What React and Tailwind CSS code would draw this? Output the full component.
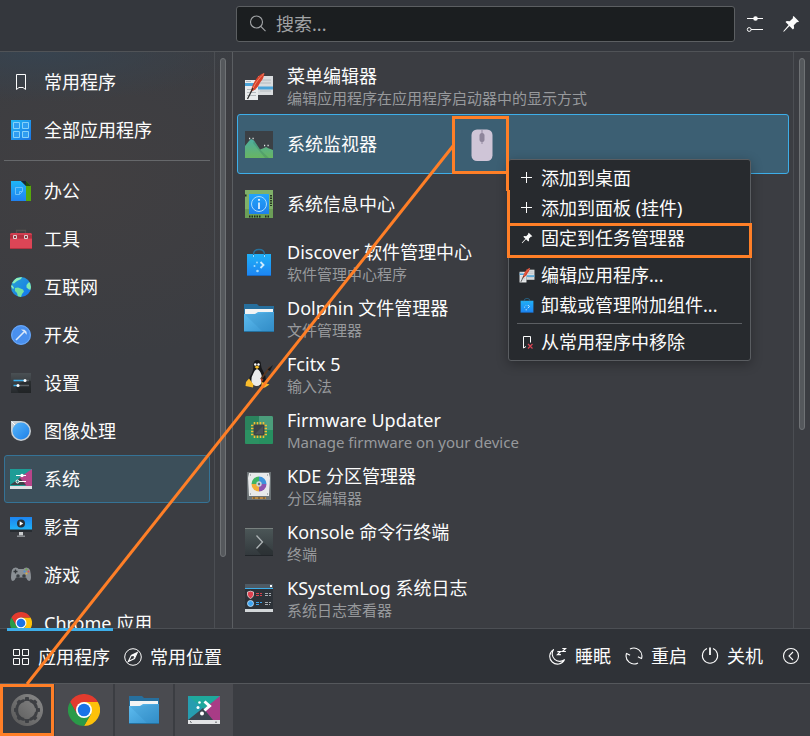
import React from "react";

/* ---------- symbolic icons ---------- */

function BookmarkIcon({ className = "size-[22px]" }) {
  return (
    <svg viewBox="0 0 22 22" className={className} fill="none" stroke="#fcfcfc" strokeWidth="1">
      <path d="M6.5 3.5h9v15l-2.5-2h-4l-2.5 2z" />
    </svg>
  );
}

function SearchIcon() {
  return (
    <svg viewBox="0 0 20 20" className="size-5 shrink-0" fill="none" stroke="#a3a6a8" strokeWidth="1.1">
      <circle cx="8.5" cy="8" r="6" />
      <path d="M12.8 12.3l4.7 4.9" />
    </svg>
  );
}

function ConfigureIcon() {
  return (
    <svg viewBox="0 0 18 18" className="size-[18px]" fill="none" stroke="#fcfcfc">
      <path d="M1 3.5h16M5 14.5h12" />
      <circle cx="9.5" cy="3.5" r="2.3" fill="#fcfcfc" stroke="none" />
      <circle cx="3.2" cy="14.5" r="1.9" />
    </svg>
  );
}

function PinIcon({ className }) {
  return (
    <svg viewBox="0 0 18 18" className={className} fill="#fcfcfc">
      <path d="M11.6 1l5.4 5.4-1 .9-.9-.4-3.3 3.3.3 3-1.2 1.2-3.4-3.4L1.9 16.7 1.2 16.2 6.6 10.1 3.5 7l1.2-1 3 .3L11.1 2.9l-.4-.9z" />
    </svg>
  );
}

function GridIcon() {
  return (
    <svg viewBox="0 0 18 18" className="size-[18px]" fill="none" stroke="#fcfcfc">
      <path d="M1.5 1.5h6v6h-6zM10.5 1.5h6v6h-6zM1.5 10.5h6v6h-6zM10.5 10.5h6v6h-6z" />
    </svg>
  );
}

function CompassIcon() {
  return (
    <svg viewBox="0 0 18 18" className="size-[18px]" fill="none" stroke="#fcfcfc">
      <circle cx="9" cy="9" r="8.3" />
      <path d="M13.3 4.5L7.3 7.5l-3 6 6.2-3z" strokeWidth="1.1" />
      <path d="M13.3 4.5L7.3 7.5l2.8 3z" fill="#fcfcfc" stroke="none" />
      <circle cx="9" cy="9" r="1" fill="#2f3237" stroke="none" />
    </svg>
  );
}

function SleepIcon() {
  return (
    <svg viewBox="0 0 18 18" className="size-[18px]" fill="none" stroke="#fcfcfc" strokeWidth="1.1">
      <path d="M4.5 2.6A7.8 7.8 0 1 0 15.5 12.8 A7.6 7.6 0 0 1 4.5 2.6z" strokeLinejoin="round" />
      <path d="M8.3 4.6h3.2L8.5 7.6h3.4M13.3 1.5h3.2L13.5 4.5h3.4" strokeWidth="1.2" />
    </svg>
  );
}

function RestartIcon() {
  return (
    <svg viewBox="0 0 18 18" className="size-[18px]" fill="none" stroke="#fcfcfc" strokeWidth="1.1">
      <path d="M5 2.1A8 8 0 0 1 16.5 11.500M1.5 6.500A8 8 0 0 0 13 15.900" />
      <path d="M16.900 11.800L12.900 9.800M1.100 6.200L5.100 8.200" />
    </svg>
  );
}

function PowerIcon() {
  return (
    <svg viewBox="0 0 18 18" className="size-[18px]" fill="none" stroke="#fcfcfc" strokeWidth="1.1">
      <path d="M6 1.6a7.6 7.6 0 1 0 6 0" />
      <path d="M9 .5v7.5" strokeWidth="1.8" />
    </svg>
  );
}

function BackIcon() {
  return (
    <svg viewBox="0 0 18 18" className="size-[18px]" fill="none" stroke="#fcfcfc" strokeWidth="1.1">
      <circle cx="9" cy="9" r="7.5" />
      <path d="M11 5L7 9l4 4" />
    </svg>
  );
}

function PlusIcon() {
  return (
    <svg viewBox="0 0 16 16" className="size-4" stroke="#fcfcfc">
      <path d="M7.5 2v11M2 7.5h11" />
    </svg>
  );
}

function BookmarkRemoveIcon() {
  return (
    <svg viewBox="0 0 16 16" className="size-4" fill="none">
      <path d="M7 12.5l-2.5 1.5V2.5h7v6" stroke="#fcfcfc" />
      <path d="M9 10l4.5 4.5M13.500 10L9 14.500" stroke="#da4453" strokeWidth="1.2" />
    </svg>
  );
}

/* ---------- category icons ---------- */

function AllAppsIcon() {
  return (
    <svg viewBox="0 0 22 22" className="size-[22px]">
      <defs>
        <linearGradient id="allApps" x1="0" y1="0" x2="1" y2="1">
          <stop offset="0" stopColor="#22b8f4" />
          <stop offset="1" stopColor="#1c74e4" />
        </linearGradient>
      </defs>
      <path d="M1 1h20v20H1z" fill="url(#allApps)" />
      <path d="M3.5 3.5h6v6h-6zM12.5 3.5h6v6h-6zM3.5 12.5h6v6h-6zM12.5 12.5h6v6h-6z" fill="#2f9df0" stroke="#86d2fa" />
    </svg>
  );
}

function OfficeIcon() {
  return (
    <svg viewBox="0 0 22 22" className="size-[22px]">
      <defs>
        <linearGradient id="office" x1="0" y1="0" x2="0" y2="1">
          <stop offset="0" stopColor="#1fb6f8" />
          <stop offset="1" stopColor="#2081f0" />
        </linearGradient>
      </defs>
      <path d="M12 1h4l5 5v15h-9z" fill="#56a80c" />
      <path d="M16 1v5h5z" fill="#234a10" />
      <path d="M1 1h10l5 5v15H1z" fill="url(#office)" />
      <path d="M11 1h5v5z" fill="#17263a" />
      <path d="M5.5 7.5h7v4l-3 3h-4zM12.5 11.5h-3v3" fill="none" stroke="#6cbff9" />
    </svg>
  );
}

function ToolboxIcon() {
  return (
    <svg viewBox="0 0 22 22" className="size-[22px]">
      <path d="M6.5 6V2.5h9V6" fill="none" stroke="#54534f" strokeWidth="1.3" />
      <path d="M0 21V6.5Q0 5 1.5 5h19Q22 5 22 6.5V21z" fill="#d23f50" />
      <path d="M0 7h22v3.5H0z" fill="#b0303f" />
      <path d="M0 11h22v9H0z" fill="#dc4556" />
      <path d="M0 20.300h22v.7H0z" fill="#a52f3c" />
      <path d="M3.5 7.5h3v3h-3zM14.5 7.5h3v3h-3z" fill="#8e3640" stroke="#dcd3d3" />
    </svg>
  );
}

function GlobeIcon() {
  return (
    <svg viewBox="0 0 22 22" className="size-[22px]">
      <defs>
        <linearGradient id="globe" x1="0" y1="0" x2="1" y2="1">
          <stop offset="0" stopColor="#2aa4cf" />
          <stop offset="1" stopColor="#1274f2" />
        </linearGradient>
        <clipPath id="globeClip">
          <circle cx="11" cy="11" r="10" />
        </clipPath>
      </defs>
      <circle cx="11" cy="11" r="10" fill="url(#globe)" />
      <g clipPath="url(#globeClip)">
        <path d="M2 7L6 2l6-1-1 2-4 2-3 2.500zM0 9l2.500.5L4 12l-1 1z" fill="#8ff0b8" />
        <path d="M5 12l3-.5 5 2 1 2-2 2.500-1 3H8l-1-4-2-2z" fill="#74e3a0" />
        <path d="M16.500 9l2-2.500L22 6v8l-3-.500-2.500-2z" fill="#82eaae" />
      </g>
    </svg>
  );
}

function HammerIcon() {
  return (
    <svg viewBox="0 0 22 22" className="size-[22px]">
      <circle cx="11" cy="11" r="10" fill="#4a90ee" />
      <circle cx="11" cy="11" r="9.300" fill="none" stroke="#6fabf7" />
      <path d="M6 16l8-8" stroke="#dce9fa" strokeWidth="1.600" />
      <path d="M11 5.500l3.500.2 2 2 .3 3-1.600-1.500-2-2z" fill="#dce9fa" />
    </svg>
  );
}

function SettingsIcon() {
  return (
    <svg viewBox="0 0 22 22" className="size-[22px]">
      <defs>
        <linearGradient id="settings" x1="0" y1="0" x2="0" y2="1">
          <stop offset="0" stopColor="#4a5054" />
          <stop offset="1" stopColor="#25292c" />
        </linearGradient>
      </defs>
      <path d="M1 1h20v20H1z" fill="url(#settings)" />
      <path d="M5 14l4 7h12V9l-5-1z" fill="#1b1e20" opacity=".5" />
      <path d="M3.5 8.500H15M3.500 13.500h5" stroke="#3daee9" strokeWidth="1.300" />
      <path d="M15 8.500h4M9 13.500h10" stroke="#5b6165" strokeWidth="1.300" />
      <circle cx="15" cy="8.500" r="1.500" fill="#fff" />
      <circle cx="8" cy="13.500" r="1.500" fill="#fff" />
    </svg>
  );
}

function GraphicsIcon() {
  return (
    <svg viewBox="0 0 22 22" className="size-[22px]">
      <defs>
        <linearGradient id="graphics" x1="0" y1="0" x2="1" y2="1">
          <stop offset="0" stopColor="#57b6fa" />
          <stop offset="1" stopColor="#1d7fe8" />
        </linearGradient>
      </defs>
      <path d="M1 1h10a10 10 0 1 1-10 10z" fill="#c9d0d5" />
      <circle cx="11" cy="11" r="8.500" fill="url(#graphics)" />
      <path d="M1.500 1.500L5 5" stroke="#fff" />
    </svg>
  );
}

function SystemIcon() {
  return (
    <svg viewBox="0 0 22 22" className="size-[22px]">
      <path d="M0 1h22v19H0z" fill="#1e9c96" />
      <path d="M22 1v16H10z" fill="#b03f83" />
      <path d="M22 1L9 10l7 8h6z" fill="#b7458a" />
      <path d="M0 17L10 10l6 7z" fill="#3d4248" />
      <path d="M0 18h22v3H0z" fill="#dfe1e3" />
      <path d="M6 7.500h10M7 13.500h9" stroke="#fff" />
      <circle cx="12" cy="7.500" r="1.700" fill="#fff" />
      <circle cx="7.500" cy="13.500" r="1.500" fill="#1e8582" stroke="#fff" />
    </svg>
  );
}

function MultimediaIcon() {
  return (
    <svg viewBox="0 0 22 22" className="size-[22px]">
      <defs>
        <linearGradient id="multimedia" x1="0" y1="0" x2="0" y2="1">
          <stop offset="0" stopColor="#1d84f0" />
          <stop offset="1" stopColor="#1fb4f8" />
        </linearGradient>
      </defs>
      <path d="M0 1h22v13H0z" fill="url(#multimedia)" />
      <path d="M0 13.500h22v2.500H0z" fill="#272c31" />
      <circle cx="11" cy="7.500" r="4" fill="#2a3138" />
      <path d="M9.700 5.300v4.400l3.500-2.200z" fill="#fff" />
      <path d="M9 16h4v3.500H9z" fill="#c8cbcd" />
      <path d="M7 19.500h8V21H7z" fill="#888c90" />
    </svg>
  );
}

function GamesIcon() {
  return (
    <svg viewBox="0 0 22 22" className="size-[22px]">
      <path d="M2 6q1-2.500 3.500-2.500Q8 3.500 8.500 5h5q.5-1.500 3-1.500T20 6q1 4 1 7.500-.2 3.500-2 3.500-1.500 0-3-3.500H6Q4.500 17 3 17q-1.800 0-2-3.500Q1 10 2 6z" fill="#8b9095" />
      <path d="M5.500 5.500v4M3.500 7.500h4" stroke="#33373b" strokeWidth="1.300" />
      <circle cx="8" cy="12" r="1.800" fill="#3a3f44" />
      <circle cx="14" cy="12" r="1.800" fill="#3a3f44" />
      <circle cx="16.500" cy="5.500" r="1" fill="#6fae46" />
      <circle cx="18.500" cy="7.500" r="1" fill="#d9534f" />
      <circle cx="14.500" cy="7.500" r="1" fill="#4b91d8" />
      <circle cx="16.500" cy="9.500" r="1" fill="#e3b23c" />
    </svg>
  );
}

function ChromeIcon({ className = "size-[22px]" }) {
  return (
    <svg viewBox="0 0 48 48" className={className}>
      <path d="M24 12h20.800A24 24 0 0 1 24 48l10.400-18z" fill="#fdc10a" />
      <path d="M3.200 12A24 24 0 0 1 44.800 12H24L13.600 30z" fill="#e33b2e" />
      <path d="M3.200 12A24 24 0 0 0 24 48l10.400-18H13.600z" fill="#2a9a48" />
      <circle cx="24" cy="24" r="12" fill="#fff" />
      <circle cx="24" cy="24" r="9.400" fill="#1a73e8" />
    </svg>
  );
}

/* ---------- application icons ---------- */

function MenuEditorIcon({ className = "size-[30px]" }) {
  return (
    <svg viewBox="0 0 30 30" className={className}>
      <path d="M14 5h15v19H14z" fill="#d9dcde" />
      <path d="M16 9h11M16 12h11M16 20h11" stroke="#b4babe" />
      <path d="M14 15.500h15v3H14z" fill="#4aa3d8" />
      <path d="M1 9h13v20H1z" fill="#e9ebec" />
      <path d="M1 12h13v3H1z" fill="#4aa3d8" />
      <path d="M3 18.500h9M3 21.500h9M3 24.500h9M2 10.500h5" stroke="#b4babe" />
      <path d="M20.500 2c-6 1-11 8-14 19 6-2 8-6 10-10 2-2 3.500-5 4-9z" fill="#d6402b" />
      <path d="M20 2.500C14 8 10 14 8 20" stroke="#f08a6a" fill="none" />
      <path d="M9 17L3.500 28" stroke="#2b2b2b" strokeWidth="1.300" />
    </svg>
  );
}

function MonitorIcon() {
  return (
    <svg viewBox="0 0 30 30" className="size-[30px]">
      <defs>
        <linearGradient id="monitor" x1="0" y1="0" x2="0" y2="1">
          <stop offset="0" stopColor="#4dada0" />
          <stop offset="1" stopColor="#68b562" />
        </linearGradient>
      </defs>
      <path d="M1 2h28v27H1z" fill="#3b4045" />
      <path d="M1 17l4-5 2-2 3 1.500 6 9 4-1.500 2-1 3 1.500 4 1.500v8H1z" fill="url(#monitor)" />
      <path d="M10 12l6 8.500 9 8.500H21L9 14z" fill="#2d6c5a" opacity=".25" />
      <path d="M5 9.500h1.200M8.500 9.500h1.200M20 16.500h1.200M23.500 16.500h1.200" stroke="#e6ebe9" strokeWidth="1.500" />
    </svg>
  );
}

function InfoCenterIcon() {
  return (
    <svg viewBox="0 0 30 30" className="size-[30px]">
      <defs>
        <linearGradient id="infoCenter" x1="0" y1="0" x2="0" y2="1">
          <stop offset="0" stopColor="#22a4fb" />
          <stop offset="1" stopColor="#1d80ec" />
        </linearGradient>
      </defs>
      <path d="M1 1h28v28H1z" fill="#7fb069" />
      <path d="M1 20h28v9H1z" fill="#6c9e57" />
      <path d="M1 6.500h2M27 6v11M5 27.500h12M21 27.500h4" stroke="#1f2b1b" strokeWidth="1.800" strokeDasharray="1.500 1" />
      <path d="M5 5h20v20H5z" fill="url(#infoCenter)" />
      <circle cx="15" cy="15" r="7.500" fill="none" stroke="#a9dbfd" />
      <path d="M15 13.500V20" stroke="#fff" strokeWidth="1.500" />
      <path d="M15 10v1.800" stroke="#fff" strokeWidth="1.700" />
    </svg>
  );
}

function DiscoverIcon({ className = "size-[30px]" }) {
  return (
    <svg viewBox="0 0 30 30" className={className}>
      <defs>
        <linearGradient id="discover" x1="0" y1="0" x2="0" y2="1">
          <stop offset="0" stopColor="#1fb0f7" />
          <stop offset="1" stopColor="#1d84f2" />
        </linearGradient>
      </defs>
      <path d="M3 7h24v22H3z" fill="url(#discover)" />
      <path d="M3 28h24v1H3z" fill="#1669c4" />
      <path d="M9.500 10V7.500q0-5 5.500-5t5.500 5V10" fill="none" stroke="#27719b" strokeWidth="1.300" />
      <path d="M9.500 8v2M20.500 8v2" stroke="#9fdcfb" />
      <path d="M16.500 15l3 3-3 3" fill="none" stroke="#cfecfe" strokeWidth="1.800" />
      <circle cx="13" cy="15.500" r=".9" fill="#a5dafb" />
      <circle cx="10.500" cy="19" r="1" fill="#a5dafb" />
      <circle cx="13.500" cy="24" r="1.300" fill="#a5dafb" />
    </svg>
  );
}

function FolderIcon() {
  return (
    <svg viewBox="0 0 30 30" className="size-[30px]">
      <defs>
        <linearGradient id="folder" x1="0" y1="0" x2="1" y2="1">
          <stop offset="0" stopColor="#5fbdf0" />
          <stop offset="1" stopColor="#3390cc" />
        </linearGradient>
      </defs>
      <path d="M0 1h13l2 2h15v8H0z" fill="#276f9d" />
      <path d="M1 6h28v6H1z" fill="#f3f4f4" />
      <path d="M0 29V11h11l3-2h16v20z" fill="url(#folder)" />
      <path d="M1 11.500l18 17.500h11V9.500z" fill="#2a7db5" opacity=".2" />
      <path d="M0 28h30v1H0z" fill="#25719f" />
    </svg>
  );
}

function TuxIcon() {
  return (
    <svg viewBox="0 0 30 30" className="size-[30px]">
      <path d="M13 1q4 0 4 5 0 3 2.500 7 3 5 2 9l-3 5H8l-3-5q0-4 3-8 1.500-3 1.300-7Q9.300 1 13 1z" fill="#16171a" />
      <path d="M13 10q3 1 4.500 6 1.500 7-1 9.500-2 2-4.500 1.500-4-.5-4.500-4Q7 18 9.500 14q1.500-3.500 3.500-4z" fill="#e9eaeb" />
      <circle cx="11.300" cy="5.500" r="1.200" fill="#fff" />
      <circle cx="14.500" cy="5.500" r="1.200" fill="#fff" />
      <path d="M10.500 8l2.500-1.500L15.500 8l-2.500 2z" fill="#f6bd27" />
      <path d="M5 19.500l4.500 6-.5 3L1.500 27l.5-4zM17.500 23l3.500 1 4.500 1.500L21 28.500l-3.500.5z" fill="#f9bc2c" />
      <path d="M17 20l9-12" stroke="#5b371f" strokeWidth="1.800" />
      <path d="M23.500 10.500l5.500-4.500-3 6z" fill="#17181b" />
      <path d="M16.500 19l3 1.500-2 3z" fill="#a23c22" />
    </svg>
  );
}

function FirmwareIcon() {
  return (
    <svg viewBox="0 0 30 30" className="size-[30px]">
      <rect x="1" y="1" width="28" height="28" rx="1.500" fill="#2b835d" />
      <path d="M15 1h12.500Q29 1 29 2.500V15H15z" fill="#4b9d7b" />
      <path d="M1 15h14v14H2.500Q1 29 1 27.500z" fill="#2c9162" />
      <path d="M15 15h14v12.500q0 1.500-1.500 1.500H15z" fill="#279060" />
      <path d="M10.500 7v3M13.500 7v3M16.500 7v3M19.500 7v3M10.500 20v3M13.500 20v3M16.500 20v3M19.500 20v3M7 10.500h3M7 13.500h3M7 16.500h3M7 19.500h3M20 10.500h3M20 13.500h3M20 16.500h3M20 19.500h3" stroke="#f0bd35" strokeWidth="1.600" />
      <path d="M9.500 9.500h11v11h-11z" fill="#3c4347" />
      <path d="M11 19l8-8v8z" fill="#4c5357" />
    </svg>
  );
}

function PartitionIcon() {
  return (
    <svg viewBox="0 0 30 30" className="size-[30px]">
      <path d="M3 1h24v28H3z" fill="#6b7275" />
      <path d="M5 2h20l1 5-1 18H5L4 7z" fill="#e8eaeb" />
      <path d="M8 26h14v2H8z" fill="#ba8a45" />
      <path d="M10 26v2M15 26v2M20 26v2" stroke="#54432b" />
      <path d="M15 13V5.500A7.500 7.500 0 0 1 22.500 13z" fill="#3e93dc" />
      <path d="M15 13h7.500a7.500 7.500 0 0 1-7.500 7.500z" fill="#8c55b0" />
      <path d="M15 13v7.500A7.500 7.500 0 0 1 7.500 13z" fill="#f2ae38" />
      <path d="M15 13H7.500A7.500 7.500 0 0 1 15 5.500z" fill="#3fb564" />
      <circle cx="15" cy="13" r="2.700" fill="#cdd7da" />
      <circle cx="15" cy="13" r="1.200" fill="#667379" />
      <path d="M6 4h1M23 4h1M6 23h1M23 23h1" stroke="#777f83" />
    </svg>
  );
}

function KonsoleIcon() {
  return (
    <svg viewBox="0 0 30 30" className="size-[30px]">
      <defs>
        <linearGradient id="konsole" x1="0" y1="0" x2="0" y2="1">
          <stop offset="0" stopColor="#4c5758" />
          <stop offset="1" stopColor="#32383c" />
        </linearGradient>
      </defs>
      <path d="M1 1h28v28H1z" fill="url(#konsole)" />
      <path d="M19 15l10 9v5H18l-6-7z" fill="#24282b" opacity=".45" />
      <path d="M1 1.500h28" stroke="#79817f" />
      <path d="M1 28.500h28" stroke="#22262a" />
      <path d="M12.500 8.500l6 6.500-6 6.500" fill="none" stroke="#aeb4b6" strokeWidth="1.300" />
    </svg>
  );
}

function SystemLogIcon() {
  return (
    <svg viewBox="0 0 30 30" className="size-[30px]">
      <path d="M1 1h28v27H1z" fill="#2d3238" />
      <path d="M1 1h28v4H1z" fill="#4e5a64" />
      <path d="M26 2h2v2h-2z" fill="#fff" />
      <path d="M1 5h28v1H1z" fill="#3daee9" />
      <path d="M3.500 9l3-.8 3 .8v3q-.5 2.500-3 3.500-2.500-1-3-3.500z" fill="#e0414f" stroke="#e9d7d9" strokeWidth=".8" />
      <circle cx="6.500" cy="20.500" r="3" fill="#3ea5f3" stroke="#cfe6f7" strokeWidth=".8" />
      <path d="M12 10.500h6M12 12.500h6" stroke="#d8434f" strokeDasharray="3 1" />
      <path d="M12 19.500h6M12 21.500h3" stroke="#3da4ee" strokeDasharray="3 1" />
      <path d="M21 10.500h6M21 12.500h6M21 19.500h6M21 21.500h5" stroke="#a6adb2" strokeDasharray="3 1" />
      <path d="M1 26h28v3H1z" fill="#d3d7d9" />
    </svg>
  );
}

const launcherTeeth = [0, 45, 90, 135, 180, 225, 270, 315];

function LauncherIcon() {
  return (
    <svg viewBox="0 0 32 32" className="size-8">
      <defs>
        <linearGradient id="launcher" x1="1" y1="0" x2="0" y2="1">
          <stop offset="0" stopColor="#8c8c8c" />
          <stop offset="1" stopColor="#565656" />
        </linearGradient>
      </defs>
      <circle cx="16" cy="16" r="16" fill="url(#launcher)" />
      <path d="M13 6.500A9.800 9.800 0 0 0 13 25.500M19 25.500A9.800 9.800 0 0 0 25.500 18M25.500 14A9.800 9.800 0 0 0 19 6.500" fill="none" stroke="#3d3f43" strokeWidth="3" />
      <path d="M13 6.500A9.800 9.800 0 0 1 19 6.500M13 25.500A9.800 9.800 0 0 0 19 25.500M25.500 18A9.800 9.800 0 0 0 25.500 14" fill="none" stroke="#3d3f43" strokeWidth="1.500" />
      {launcherTeeth.map((angle) => (
        <path key={angle} d="M14.300 3h3.400l.6 3.500h-4.600z" fill="#3d3f43" transform={`rotate(${angle} 16 16)`} />
      ))}
    </svg>
  );
}

function PlasmaIcon() {
  return (
    <svg viewBox="0 0 32 28" className="h-7 w-8">
      <path d="M0 0h32v28H0z" fill="#269db0" />
      <path d="M0 0h32L17 14z" fill="#1fa99c" />
      <path d="M32 0v24H24L16 13z" fill="#a83c86" />
      <path d="M0 24l15-12 10 12z" fill="#3b4550" />
      <path d="M0 24h32v4H0z" fill="#e3e4e6" />
      <path d="M2 25.500l1.500 1M28 25.500v1.500" stroke="#44484c" />
      <path d="M16.500 5.500l5 4.500-5 4.500" fill="none" stroke="#fff" strokeWidth="3" />
      <circle cx="11.500" cy="6.500" r="1.300" fill="#fff" />
      <circle cx="10" cy="11.500" r="1.500" fill="#fff" />
      <circle cx="14" cy="17.500" r="2" fill="#fff" />
    </svg>
  );
}

/* ---------- data ---------- */

const favourites = [
  { name: "常用程序", Icon: BookmarkIcon },
  { name: "全部应用程序", Icon: AllAppsIcon },
];

const categories = [
  { name: "办公", Icon: OfficeIcon },
  { name: "工具", Icon: ToolboxIcon },
  { name: "互联网", Icon: GlobeIcon },
  { name: "开发", Icon: HammerIcon },
  { name: "设置", Icon: SettingsIcon },
  { name: "图像处理", Icon: GraphicsIcon },
  { name: "系统", Icon: SystemIcon, selected: true },
  { name: "影音", Icon: MultimediaIcon },
  { name: "游戏", Icon: GamesIcon },
  { name: "Chrome 应用", Icon: ChromeIcon },
];

const apps = [
  { name: "菜单编辑器", note: "编辑应用程序在应用程序启动器中的显示方式", Icon: MenuEditorIcon },
  { name: "系统监视器", Icon: MonitorIcon, selected: true },
  { name: "系统信息中心", Icon: InfoCenterIcon },
  { name: "Discover 软件管理中心", note: "软件管理中心程序", Icon: DiscoverIcon },
  { name: "Dolphin 文件管理器", note: "文件管理器", Icon: FolderIcon },
  { name: "Fcitx 5", note: "输入法", Icon: TuxIcon },
  { name: "Firmware Updater", note: "Manage firmware on your device", Icon: FirmwareIcon },
  { name: "KDE 分区管理器", note: "分区编辑器", Icon: PartitionIcon },
  { name: "Konsole 命令行终端", note: "终端", Icon: KonsoleIcon },
  { name: "KSystemLog 系统日志", note: "系统日志查看器", Icon: SystemLogIcon },
];

/* ---------- parts ---------- */

function CategoryButton({ item }) {
  const { name, Icon, selected } = item;
  return (
    <li>
      <button
        type="button"
        aria-pressed={!!selected}
        className={
          "flex h-12 w-full items-center gap-3 rounded-[3px] border pl-[5px] text-left " +
          (selected ? "border-[#357396] bg-[#3c4f5a]" : "border-transparent")
        }
      >
        <Icon />
        <span className="whitespace-nowrap">{name}</span>
      </button>
    </li>
  );
}

function AppButton({ app }) {
  const { name, note, Icon, selected } = app;
  return (
    <li>
      <button
        type="button"
        aria-pressed={!!selected}
        className={
          "flex w-full items-center gap-[13px] rounded-[3px] border pl-1.5 text-left " +
          (note ? "h-14 " : "h-[60px] ") +
          (selected ? "border-[#3daee9] bg-[#3c5f73]" : "border-transparent")
        }
      >
        <Icon />
        <span className="flex flex-col whitespace-nowrap">
          <span className="leading-6">{name}</span>
          {note && <span className="text-[15px] leading-5 text-[#97999c]">{note}</span>}
        </span>
      </button>
    </li>
  );
}

function ScrollTrack({ size, className }) {
  return (
    <div className={"shrink-0 border-l border-[#4b4e53] py-1.5 pl-[5px] " + className}>
      <div className="w-1.5 rounded-full border border-[#6f7275] bg-[#55585c]" style={{ height: size }} />
    </div>
  );
}

function MenuItem({ icon, children }) {
  return (
    <button type="button" role="menuitem" className="flex h-[30px] w-full items-center gap-1.5 pl-2.5 text-left whitespace-nowrap">
      {icon}
      <span>{children}</span>
    </button>
  );
}

function MenuSeparator() {
  return (
    <div role="separator" className="mx-2 flex h-[7px] items-center">
      <div className="h-px w-full bg-[#5c5f63]" />
    </div>
  );
}

function ContextMenu() {
  return (
    <div
      role="menu"
      className="absolute top-[159px] left-[508px] w-[243px] rounded-[3px] border border-[#5a5d61] bg-[#272a2e] py-[3px] shadow-[0_3px_12px_rgba(0,0,0,0.3)]"
    >
      <MenuItem icon={<PlusIcon />}>添加到桌面</MenuItem>
      <MenuItem icon={<PlusIcon />}>添加到面板 (挂件)</MenuItem>
      <MenuItem icon={<PinIcon className="size-4 p-0.5" />}>固定到任务管理器</MenuItem>
      <MenuSeparator />
      <MenuItem icon={<MenuEditorIcon className="size-4" />}>编辑应用程序...</MenuItem>
      <MenuItem icon={<DiscoverIcon className="size-4" />}>卸载或管理附加组件...</MenuItem>
      <MenuSeparator />
      <MenuItem icon={<BookmarkRemoveIcon />}>从常用程序中移除</MenuItem>
    </div>
  );
}

function Annotations() {
  return (
    <svg
      viewBox="0 0 810 736"
      className="pointer-events-none absolute top-0 left-0 h-[736px] w-[810px]"
      fill="none"
      stroke="#ff7f27"
      strokeWidth="3"
      aria-hidden="true"
    >
      <rect x="471.500" y="129.500" width="21" height="31.500" rx="5.500" fill="#cfc5d7" stroke="none" />
      <path d="M482 130v14" stroke="#a79db3" strokeWidth="1.500" />
      <rect x="479.500" y="133" width="5" height="9" rx="2.500" fill="#8e859b" stroke="none" />
      <path d="M453.500 117.500h54v55h-54z" />
      <path d="M507.500 172v19M508.500 190v34" />
      <path d="M508.500 224.500h242v32h-242z" />
      <path d="M453 146L27 684" />
      <path d="M1.500 685.500h51v49h-51z" />
    </svg>
  );
}

export default function App() {
  return (
    <div className="relative flex h-screen w-full flex-col overflow-hidden bg-[#3b3d42] font-['Noto_Sans','Noto_Sans_CJK_SC',sans-serif] text-lg text-[#fcfcfc]">
      <header className="flex h-[52px] shrink-0 items-center border-b border-[#505357] bg-[#34373d] pr-px pb-[3px] pl-[236px]">
        <div className="flex h-9 flex-1 items-center gap-2 rounded-[3px] border border-[#5c5f62] bg-[#1b1e20] pl-[11px]">
          <SearchIcon />
          <input
            type="text"
            aria-label="搜索"
            placeholder="搜索..."
            className="w-full min-w-0 bg-transparent leading-6 outline-none placeholder:text-[#a1a3a5]"
          />
        </div>
        <button type="button" aria-label="配置" className="ml-0.5 flex size-9 items-center justify-center">
          <ConfigureIcon />
        </button>
        <button type="button" aria-label="固定" className="flex size-9 items-center justify-center">
          <PinIcon className="size-[18px]" />
        </button>
      </header>

      <main className="flex min-h-0 flex-1">
        <aside className="flex w-[233px] shrink-0 overflow-hidden border-r border-[#5b5e62] bg-[radial-gradient(ellipse_200px_50px_at_40px_0px,#37434f,transparent),radial-gradient(ellipse_240px_180px_at_90px_130px,#413f41,transparent)]">
          <nav className="min-w-0 flex-1 px-1 pt-1.5">
            <ul>
              {favourites.map((item) => (
                <CategoryButton key={item.name} item={item} />
              ))}
            </ul>
            <hr className="my-1.5 border-[#66686b]" />
            <ul>
              {categories.map((item) => (
                <CategoryButton key={item.name} item={item} />
              ))}
            </ul>
          </nav>
          <ScrollTrack size="88.5%" className="w-[18px]" />
        </aside>

        <section className="flex min-w-0 flex-1 overflow-hidden">
          <ul className="min-w-0 flex-1 px-1 pt-1.5">
            {apps.map((app) => (
              <AppButton key={app.name} app={app} />
            ))}
          </ul>
          <ScrollTrack size="66%" className="w-[17px]" />
        </section>
      </main>

      <footer className="relative flex h-[55px] shrink-0 items-center justify-between border-t border-[#4c4f54] bg-[#2f3237] pr-2.5 pl-[7px]">
        <div className="-mt-px flex h-[55px]">
          <button type="button" className="flex w-[106px] items-center gap-2 border-t-[3px] border-[#3daee9] pl-[5px] whitespace-nowrap">
            <GridIcon />
            <span>应用程序</span>
          </button>
          <button type="button" className="flex items-center gap-2 border-t-[3px] border-transparent pl-[11px] whitespace-nowrap">
            <CompassIcon />
            <span>常用位置</span>
          </button>
        </div>
        <div className="flex items-center gap-3.5 whitespace-nowrap">
          <button type="button" className="flex items-center gap-2">
            <SleepIcon />
            <span>睡眠</span>
          </button>
          <button type="button" className="flex items-center gap-2">
            <RestartIcon />
            <span>重启</span>
          </button>
          <button type="button" className="flex items-center gap-2">
            <PowerIcon />
            <span>关机</span>
          </button>
          <button type="button" aria-label="更多" className="ml-[5px]">
            <BackIcon />
          </button>
        </div>
      </footer>

      <div role="toolbar" className="flex h-[53px] shrink-0 gap-0.5 border-t border-[#55585c] bg-[#3b3d42]">
        <button type="button" aria-label="应用程序启动器" className="flex w-[53px] items-center justify-center">
          <LauncherIcon />
        </button>
        <button type="button" aria-label="Chrome" className="flex w-[58px] items-center justify-center bg-[#4a4b50]">
          <ChromeIcon className="size-8" />
        </button>
        <button type="button" aria-label="Dolphin" className="flex w-[58px] items-center justify-center bg-[#4a4b50]">
          <FolderIcon />
        </button>
        <button type="button" aria-label="系统设置" className="flex w-[58px] items-center justify-center bg-[#4a4b50]">
          <PlasmaIcon />
        </button>
      </div>

      <ContextMenu />
      <Annotations />
    </div>
  );
}
